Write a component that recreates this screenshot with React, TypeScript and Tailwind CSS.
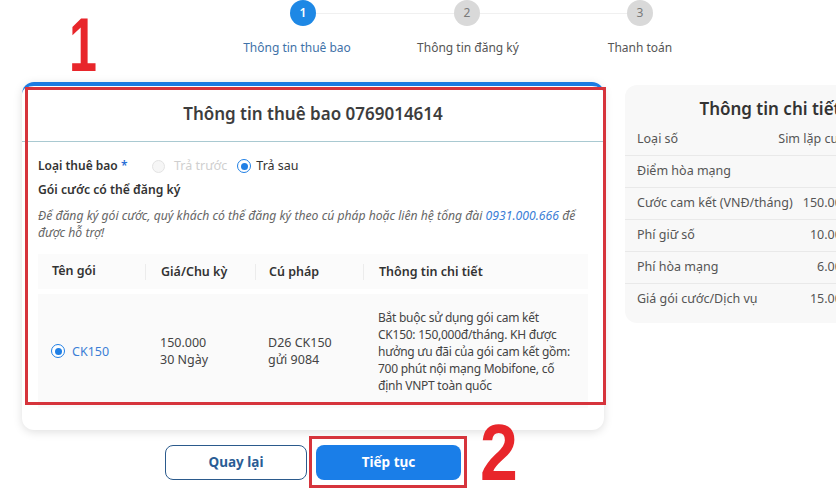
import React from 'react'

const details = [
  { label: 'Loại số', value: 'Sim lặp cuối' },
  { label: 'Điểm hòa mạng', value: '' },
  { label: 'Cước cam kết (VNĐ/tháng)', value: '150.000' },
  { label: 'Phí giữ số', value: '10.000' },
  { label: 'Phí hòa mạng', value: '6.000' },
  { label: 'Giá gói cước/Dịch vụ', value: '15.000' },
]

function Radio({ checked, disabled }: { checked?: boolean; disabled?: boolean }) {
  if (disabled) {
    return <span className="inline-block w-[13px] h-[13px] rounded-full border border-[#e3e3e3] bg-[#f6f6f6]" />
  }
  return (
    <span className="inline-flex items-center justify-center w-[14px] h-[14px] rounded-full border border-[#1f7fe5] bg-white">
      {checked && <span className="w-[7px] h-[7px] rounded-full bg-[#1f7fe5]" />}
    </span>
  )
}

function Stepper() {
  return (
    <div>
      <div className="flex items-center pl-[290px] h-[26px]">
        <div className="w-[26px] h-[26px] rounded-full bg-[#1e88e5] text-white text-[12px] font-semibold flex items-center justify-center">1</div>
        <div className="w-[138px] h-px bg-[#f0f0f0]" />
        <div className="w-[26px] h-[26px] rounded-full bg-[#d9d9d9] text-[#7a7a7a] text-[12px] flex items-center justify-center">2</div>
        <div className="w-[147px] h-px bg-[#f0f0f0]" />
        <div className="w-[26px] h-[26px] rounded-full bg-[#d9d9d9] text-[#7a7a7a] text-[12px] flex items-center justify-center">3</div>
      </div>
      <div className="flex pl-[227px] mt-[13px] text-[12px] leading-[18px]">
        <div className="w-[140px] text-center text-[#3f72a8]">Thông tin thuê bao</div>
        <div className="w-[202px] text-center text-[#555]">Thông tin đăng ký</div>
        <div className="w-[142px] text-center text-[#555]">Thanh toán</div>
      </div>
    </div>
  )
}

function SubscriberCard() {
  return (
    <div className="relative w-[582px]">
      <div className="bg-white rounded-xl border-t-4 border-[#1b7be2] shadow-[0_2px_10px_rgba(0,0,0,0.13)] pb-[22px]">
        <div className="h-[55px] flex items-center justify-center text-[17px] font-semibold text-[#3d3d3d]">
          Thông tin thuê bao 0769014614
        </div>
        <div className="h-px bg-[#a9c9d1]" />

        <div className="px-4 text-[12.5px] text-[#333]">
          <div className="flex items-center h-[18px] mt-[15px]">
            <span className="font-semibold w-[114px] text-[12px]">
              Loại thuê bao <span className="text-[#2a6fd6]">*</span>
            </span>
            <span className="flex items-center gap-[9px]">
              <Radio disabled />
              <span className="text-[#cfcfcf]">Trả trước</span>
            </span>
            <span className="flex items-center gap-[5px] ml-[10px]">
              <Radio checked />
              <span>Trả sau</span>
            </span>
          </div>

          <div className="font-semibold text-[12.2px] mt-[6px] leading-[18px]">Gói cước có thể đăng ký</div>

          <div className="italic text-[12.2px] text-[#666] mt-[8px] leading-[17px] whitespace-nowrap">
            Để đăng ký gói cước, quý khách có thể đăng ký theo cú pháp hoặc liên hệ tổng đài <span className="text-[#3b7ed6]">0931.000.666</span> để
            <br />
            được hỗ trợ!
          </div>

          <div className="mt-[13px] w-[550px]">
            <div className="flex items-center h-[35px] bg-[#fbfbfb] font-semibold">
              <div className="w-[107px] pl-[14px]">Tên gói</div>
              <div className="w-[110px] pl-[15px] border-l border-[#ececec] leading-[16px]">Giá/Chu kỳ</div>
              <div className="w-[108px] pl-[13px] border-l border-[#ececec] leading-[16px]">Cú pháp</div>
              <div className="flex-1 pl-[15px] border-l border-[#ececec] leading-[16px]">Thông tin chi tiết</div>
            </div>
            <div className="flex items-center mt-[5px] h-[114px] bg-[#fafafa] text-[#444] leading-[17px]">
              <div className="w-[107px] pl-[13px] flex items-center gap-[7px]">
                <Radio checked />
                <span className="text-[#3b7ed6]">CK150</span>
              </div>
              <div className="w-[110px] pl-[15px]">
                150.000
                <br />
                30 Ngày
              </div>
              <div className="w-[108px] pl-[13px]">
                D26 CK150
                <br />
                gửi 9084
              </div>
              <div className="flex-1 pl-[15px] whitespace-nowrap text-[12px] tracking-[-0.25px]">
                Bắt buộc sử dụng gói cam kết
                <br />
                CK150: 150,000đ/tháng. KH được
                <br />
                hưởng ưu đãi của gói cam kết gồm:
                <br />
                700 phút nội mạng Mobifone, cố
                <br />
                định VNPT toàn quốc
              </div>
            </div>
          </div>
        </div>
      </div>

      {/* annotation box */}
      <div className="absolute left-[3px] top-[5px] w-[581px] h-[318px] border-[3px] border-[#d6343c] pointer-events-none" />
    </div>
  )
}

function DetailCard() {
  return (
    <div className="w-[290px] mt-[3px] bg-[#f8f8f8] rounded-xl pb-[8px] shrink-0">
      <div className="h-[38px] flex items-end justify-center text-[17px] font-semibold text-[#333] pb-[2px]">
        Thông tin chi tiết
      </div>
      {details.map((d, i) => (
        <div
          key={d.label}
          className={`flex items-center justify-between h-[32px] px-3 text-[12.5px] text-[#555] ${i > 0 ? 'border-t border-[#e9e9e9]' : ''}`}
        >
          <span>{d.label}</span>
          <span className="pr-[54px]">{d.value}</span>
        </div>
      ))}
    </div>
  )
}

export default function App() {
  return (
    <div className="relative w-[836px] h-[496px] overflow-hidden bg-white font-['Noto_Sans',sans-serif]">
      <Stepper />

      <div className="flex items-start gap-[21px] pl-[22px] mt-[25px]">
        <div>
          <SubscriberCard />
          <div className="flex justify-center gap-[9px] mt-[15px]">
            <button className="w-[142px] h-[35px] rounded-lg border border-[#2b5a8c] bg-white text-[13.5px] font-bold text-[#2a5d95]">
              Quay lại
            </button>
            <div className="relative">
              <button className="w-[145px] h-[35px] rounded-lg bg-[#1a7ee8] text-[13.5px] font-bold text-white">
                Tiếp tục
              </button>
              <div className="absolute left-[-7px] top-[-9px] w-[158px] h-[52px] border-[3px] border-[#d6343c] pointer-events-none" />
            </div>
          </div>
        </div>
        <DetailCard />
      </div>

      {/* annotation numbers */}
      <div className="absolute left-[69px] top-[7px] text-[76px] leading-none font-bold text-[#e8262b] font-['Liberation_Sans',sans-serif] scale-x-[0.66] origin-left">1</div>
      <div className="absolute left-[480px] top-[413px] text-[80px] leading-none font-bold text-[#e8262b] font-['Liberation_Sans',sans-serif] scale-x-[0.85] origin-left">2</div>
    </div>
  )
}
